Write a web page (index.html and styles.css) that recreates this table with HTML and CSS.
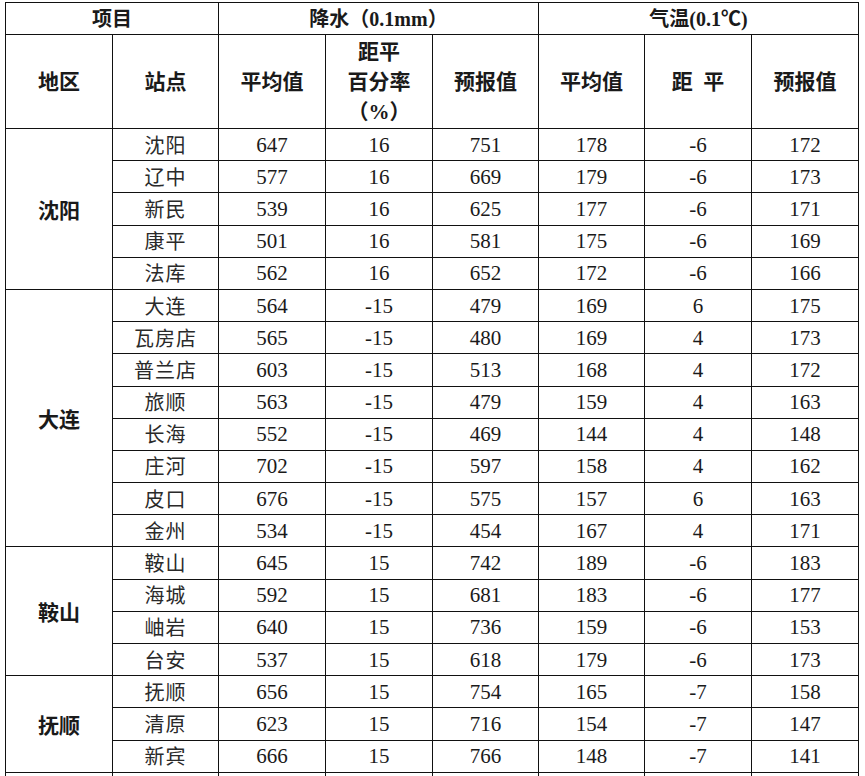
FILE: index.html
```html
<!DOCTYPE html>
<html lang="zh-CN">
<head>
<meta charset="utf-8">
<title>降水气温预报表</title>
<link rel="stylesheet" href="styles.css">
</head>
<body>
<table class="grid">
  <colgroup>
    <col class="c1"><col class="c2"><col class="c3"><col class="c4"><col class="c5"><col class="c6"><col class="c7"><col class="c8">
  </colgroup>
  <thead>
    <tr class="h1">
      <th colspan="2">项目</th>
      <th colspan="3">降水（0.1mm）</th>
      <th colspan="3">气温(0.1℃)</th>
    </tr>
    <tr class="h2">
      <th>地区</th>
      <th>站点</th>
      <th>平均值</th>
      <th class="stack">距平<br>百分率<br>（%）</th>
      <th>预报值</th>
      <th>平均值</th>
      <th>距&nbsp;&nbsp;平</th>
      <th>预报值</th>
    </tr>
  </thead>
  <tbody>
    <tr><td class="region" rowspan="5">沈阳</td><td class="st">沈阳</td><td>647</td><td>16</td><td>751</td><td>178</td><td>-6</td><td>172</td></tr>
    <tr><td class="st">辽中</td><td>577</td><td>16</td><td>669</td><td>179</td><td>-6</td><td>173</td></tr>
    <tr><td class="st">新民</td><td>539</td><td>16</td><td>625</td><td>177</td><td>-6</td><td>171</td></tr>
    <tr><td class="st">康平</td><td>501</td><td>16</td><td>581</td><td>175</td><td>-6</td><td>169</td></tr>
    <tr><td class="st">法库</td><td>562</td><td>16</td><td>652</td><td>172</td><td>-6</td><td>166</td></tr>

    <tr><td class="region" rowspan="8">大连</td><td class="st">大连</td><td>564</td><td>-15</td><td>479</td><td>169</td><td>6</td><td>175</td></tr>
    <tr><td class="st">瓦房店</td><td>565</td><td>-15</td><td>480</td><td>169</td><td>4</td><td>173</td></tr>
    <tr><td class="st">普兰店</td><td>603</td><td>-15</td><td>513</td><td>168</td><td>4</td><td>172</td></tr>
    <tr><td class="st">旅顺</td><td>563</td><td>-15</td><td>479</td><td>159</td><td>4</td><td>163</td></tr>
    <tr><td class="st">长海</td><td>552</td><td>-15</td><td>469</td><td>144</td><td>4</td><td>148</td></tr>
    <tr><td class="st">庄河</td><td>702</td><td>-15</td><td>597</td><td>158</td><td>4</td><td>162</td></tr>
    <tr><td class="st">皮口</td><td>676</td><td>-15</td><td>575</td><td>157</td><td>6</td><td>163</td></tr>
    <tr><td class="st">金州</td><td>534</td><td>-15</td><td>454</td><td>167</td><td>4</td><td>171</td></tr>

    <tr><td class="region" rowspan="4">鞍山</td><td class="st">鞍山</td><td>645</td><td>15</td><td>742</td><td>189</td><td>-6</td><td>183</td></tr>
    <tr><td class="st">海城</td><td>592</td><td>15</td><td>681</td><td>183</td><td>-6</td><td>177</td></tr>
    <tr><td class="st">岫岩</td><td>640</td><td>15</td><td>736</td><td>159</td><td>-6</td><td>153</td></tr>
    <tr><td class="st">台安</td><td>537</td><td>15</td><td>618</td><td>179</td><td>-6</td><td>173</td></tr>

    <tr><td class="region" rowspan="3">抚顺</td><td class="st">抚顺</td><td>656</td><td>15</td><td>754</td><td>165</td><td>-7</td><td>158</td></tr>
    <tr><td class="st">清原</td><td>623</td><td>15</td><td>716</td><td>154</td><td>-7</td><td>147</td></tr>
    <tr><td class="st">新宾</td><td>666</td><td>15</td><td>766</td><td>148</td><td>-7</td><td>141</td></tr>

    <tr class="cut"><td></td><td></td><td></td><td></td><td></td><td></td><td></td><td></td></tr>
  </tbody>
</table>
</body>
</html>
```

FILE: styles.css
```css
html, body {
  margin: 0;
  padding: 0;
  background: #ffffff;
  overflow: hidden;
}

body {
  width: 865px;
  height: 776px;
  padding: 2px 0 0 5px;
  box-sizing: border-box;
  font-family: "Liberation Serif", "Noto Sans CJK SC", serif;
  color: #1a1a1a;
}

.grid {
  border-collapse: collapse;
  table-layout: fixed;
  width: 854px;
}

.c1, .c3, .c4, .c7, .c8 { width: 107px; }
.c2, .c5, .c6 { width: 106px; }

.grid th,
.grid td {
  border: 1px solid #111;
  padding: 0;
  text-align: center;
  vertical-align: middle;
  font-size: 21px;
  line-height: 24px;
}

.grid th {
  font-family: "Liberation Serif", "Noto Sans CJK SC", serif;
  font-weight: bold;
  font-size: 21px;
}

.h1 { height: 32px; }
.h1 th { font-size: 20px; }

.h2 { height: 94px; }
.h2 th { font-size: 21px; }
.h2 th.stack { line-height: 30px; padding-top: 1px; }

.grid tbody tr { height: 32.2px; }

.grid td.st {
  font-family: "Noto Sans CJK SC", serif;
  font-weight: 400;
  font-size: 20px;
  letter-spacing: 1px;
  color: #2a2a2a;
}

.grid td.region {
  font-family: "Noto Sans CJK SC", serif;
  font-weight: bold;
  font-size: 21px;
}

.grid tr.cut { height: 30px; }
```
